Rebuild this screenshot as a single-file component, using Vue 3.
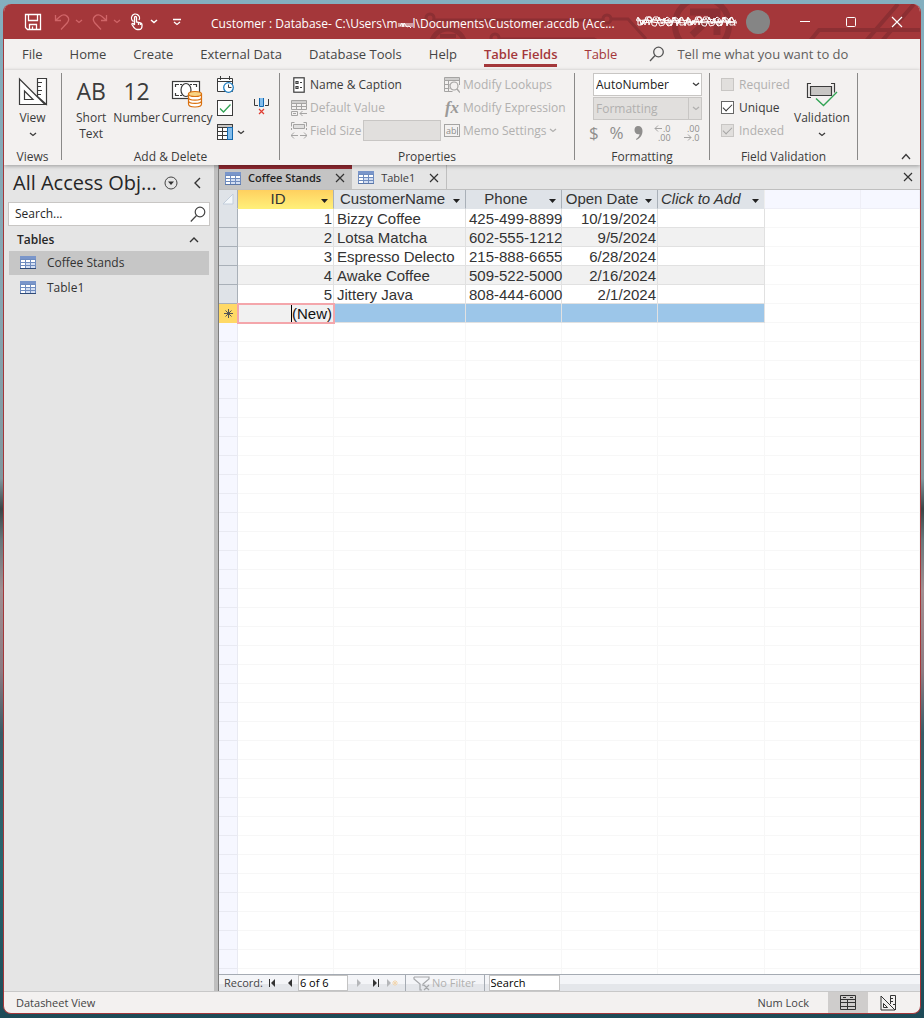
<script setup>
import { ref } from 'vue'

const menu = ['File', 'Home', 'Create', 'External Data', 'Database Tools', 'Help', 'Table Fields', 'Table']
const activeMenu = ref('Table Fields')
const objects = ['Coffee Stands', 'Table1']
const selected = ref('Coffee Stands')
const navSearch = ref('')
const recordPos = ref('6 of 6')
const recordSearch = ref('Search')
const unique = ref(true)
const columns = [
  { key: 'id', name: 'ID' },
  { key: 'name', name: 'CustomerName' },
  { key: 'phone', name: 'Phone' },
  { key: 'date', name: 'Open Date' },
  { key: 'add', name: 'Click to Add' },
]
const rows = [
  { id: 1, name: 'Bizzy Coffee', phone: '425-499-8899', date: '10/19/2024' },
  { id: 2, name: 'Lotsa Matcha', phone: '602-555-1212', date: '9/5/2024' },
  { id: 3, name: 'Espresso Delecto', phone: '215-888-6655', date: '6/28/2024' },
  { id: 4, name: 'Awake Coffee', phone: '509-522-5000', date: '2/16/2024' },
  { id: 5, name: 'Jittery Java', phone: '808-444-6000', date: '2/1/2024' },
]
const blankRows = 60

function scribble(width, height, seed) {
  const points = []
  let v = seed
  for (let x = 0; x <= width; x += 2) {
    v = (v * 37 + 11) % 101
    points.push(`${x + (v % 3)},${1 + (v % height)}`)
  }
  return points.join(' ')
}
</script>

<template>
  <div class="desktop">
    <div class="window">
      <header class="titlebar">
        <svg class="circuit" width="500" height="35" viewBox="0 0 500 35" fill="none" stroke="#8c2f33" stroke-width="4" aria-hidden="true">
          <circle cx="10" cy="14" r="4" stroke-width="3" />
          <path d="M14 16H182M192 15H208L226 35" stroke-width="3" />
          <circle cx="187" cy="15" r="4" stroke-width="3" />
          <circle cx="28" cy="42" r="17" stroke-width="5" />
          <path d="M20 32h16" stroke-width="4" />
          <circle cx="75" cy="34" r="4" stroke-width="3" />
          <path d="M79 35h95l8 4" stroke-width="3" />
          <circle cx="282" cy="21" r="27" stroke-width="6" />
          <path d="M270 8h27v23M297 8L272 31" stroke-width="7" />
          <path d="M390 37l9-11h101M446 37L478 0M462 37L494 0" />
        </svg>
        <button class="tb save" aria-label="Save">
          <svg width="18" height="18" viewBox="0 0 18 18" fill="none" stroke="#fff" stroke-width="1.3"><path d="M1.5 1.5h15v15h-13l-2-2zM4.500 1.500v6h9v-6M5.500 16.500v-5h7v5M8.500 16v-2.500" /></svg>
        </button>
        <button class="tb dim" aria-label="Undo">
          <svg width="16" height="18" viewBox="0 0 16 18" fill="none" stroke="currentColor" stroke-width="1.3"><path d="M1.500 2v5.500H7M2 7L6 3.500c5-4 11 1 7.500 6L7 16.500" /></svg>
          <svg width="8" height="5" viewBox="0 0 8 5" fill="none" stroke="currentColor" stroke-width="1.300"><path d="M1 1l3 2.500L7 1" /></svg>
        </button>
        <button class="tb dim" aria-label="Redo">
          <svg width="16" height="18" viewBox="0 0 16 18" fill="none" stroke="currentColor" stroke-width="1.300"><path d="M14.500 2v5.500H9M14 7L10 3.500c-5-4-11 1-7.500 6L9 16.500" /></svg>
          <svg width="8" height="5" viewBox="0 0 8 5" fill="none" stroke="currentColor" stroke-width="1.300"><path d="M1 1l3 2.500L7 1" /></svg>
        </button>
        <button class="tb touch" aria-label="Touch/Mouse Mode">
          <svg width="13" height="18" viewBox="0 0 13 18" fill="none" stroke="#fff" stroke-width="1.300"><path d="M3.500 8.500A4 4 0 1 1 9 7M4.500 12V4.500c0-1.500 2-1.500 2 0V9l4 .8c1 .2 1.500.8 1.500 2V13c0 2-1 3.500-3 3.500H7c-1.500 0-2-.7-3-2l-2-3c-.5-1 .8-1.500 1.500-.7l1 1.200M8.500 9.500V12M10.500 10v2" /></svg>
          <svg width="8" height="5" viewBox="0 0 8 5" fill="none" stroke="#fff" stroke-width="1.500"><path d="M1 1l3 2.500L7 1" /></svg>
        </button>
        <button class="tb" aria-label="Customize Quick Access Toolbar">
          <svg width="8" height="8" viewBox="0 0 8 8" fill="none" stroke="#fff" stroke-width="1.300"><path d="M0 1.500h8M1 4l3 2.500L7 4" /></svg>
        </button>
        <div class="title">Customer : Database- C:\Users\m<svg class="name-mask" width="15" height="8" viewBox="0 0 15 8" fill="none" stroke="#fff" stroke-width="1"><polyline :points="scribble(12, 7, 5)" /><path d="M0 3h15M0 5h15" /></svg>l\Documents\Customer.accdb (Acc...</div>
        <svg class="account" width="104" height="12" viewBox="0 0 104 12" fill="none" stroke="#fff" stroke-width="1" aria-label="Account name"><polyline :points="scribble(98, 11, 7)" /><polyline :points="scribble(98, 10, 23)" /><polyline :points="scribble(98, 11, 64)" /><path d="M1 5l7-1 9 1 9-1 10 1 9-1 12 2 9-1 12 1 9-1 14 1M6 7l9-1 9 1 12-1 14 1 9-1 14 1 14-1 14 1" /></svg>
        <span class="avatar"></span>
        <div class="window-controls">
          <button aria-label="Minimize"><svg width="12" height="12" viewBox="0 0 12 12" stroke="#fff"><path d="M1 5.500h10" /></svg></button>
          <button aria-label="Maximize"><svg width="12" height="12" viewBox="0 0 12 12" fill="none" stroke="#fff"><rect x="1.500" y="1.500" width="9" height="9" rx="1" /></svg></button>
          <button aria-label="Close"><svg width="12" height="12" viewBox="0 0 12 12" stroke="#fff" stroke-width="1.200"><path d="M1 1l10 10M11 1L1 11" /></svg></button>
        </div>
      </header>

      <nav class="menu">
        <button v-for="m in menu" :key="m" :class="{ active: m === activeMenu, contextual: m === 'Table' }" @click="activeMenu = m">{{ m }}</button>
        <label class="tellme">
          <svg width="16" height="16" viewBox="0 0 16 16" fill="none" stroke="#555" stroke-width="1.300"><circle cx="9.500" cy="6" r="4.800" /><path d="M6 9.500L1 15" /></svg>
          <input type="text" placeholder="Tell me what you want to do" aria-label="Tell me what you want to do" />
        </label>
      </nav>

      <section class="ribbon">
        <div class="group views">
          <div class="group-body">
            <button class="big">
              <svg width="30" height="30" viewBox="0 0 30 30" fill="#fff" stroke="#3b3b3b" stroke-width="1.200"><path d="M19.500 1.500h9v26l-9-8zM1.500 2v25.500H27zM6.500 14v8.500H15z" /><path d="M20 5.500h4M20 9.500h3M20 13.500h4M20 17.500h3" /></svg>
              <span>View</span>
              <svg class="chev" width="8" height="5" viewBox="0 0 8 5"><path d="M1 1l3 2.500L7 1" /></svg>
            </button>
          </div>
          <div class="group-label">Views</div>
        </div>

        <div class="group add">
          <div class="group-body">
            <button class="big"><span class="glyph">AB</span><span>Short<br />Text</span></button>
            <button class="big number"><span class="glyph">12</span><span>Number</span></button>
            <button class="big currency">
              <svg width="32" height="30" viewBox="0 0 32 30" fill="#fff" stroke="#3b3b3b" stroke-width="1.200">
                <rect x="1.500" y="4.500" width="27" height="17" /><path d="M4.500 10V7.500H8M22 7.500h3.500V10M4.500 16v2.500H8" fill="none" /><ellipse cx="15" cy="13" rx="5" ry="6.500" /><path d="M11 7.500h-2M19 7.500h2M11 18.500h-2" />
                <path d="M17.500 17v10c0 4 13 4 13 0V17z" fill="#fff" stroke="#d9700e" /><path d="M17.500 20.500c0 3.500 13 3.500 13 0M17.500 23.800c0 3.500 13 3.500 13 0" fill="none" stroke="#d9700e" /><ellipse cx="24" cy="17" rx="6.500" ry="2.500" fill="#f8d485" stroke="#d9700e" />
              </svg>
              <span>Currency</span>
            </button>
            <div class="small-stack">
              <button aria-label="Date &amp; Time"><svg width="17" height="17" viewBox="0 0 17 17" fill="#fff" stroke="#3b3b3b"><path d="M.5 2.500h15v13H.5zM.5 5.500h15M3.500 0v4M12.500 0v4" /><circle cx="11.500" cy="11.500" r="4.800" stroke="#1d7fc4" stroke-width="1.300" /><path d="M11.500 8.500v3h3" fill="none" /></svg></button>
              <button aria-label="Yes/No"><svg width="17" height="17" viewBox="0 0 17 17" fill="#fff" stroke="#3b3b3b"><rect x=".5" y=".5" width="15" height="15" /><path d="M3 8.500l3.500 3.500L13.500 4.500" fill="none" stroke="#31a354" stroke-width="1.300" /></svg></button>
              <button aria-label="More Fields"><svg width="17" height="17" viewBox="0 0 17 17" fill="#fff" stroke="#3b3b3b"><rect x=".5" y=".5" width="15" height="15" /><path d="M.5 .5h15v3H.5z" fill="#c8c6c4" /><path d="M5.500 3.500v12M.5 7.500h10M.5 11.500h10" /><path d="M10.500 3.500h5v12h-5z" fill="#83bdec" stroke="#1269b0" /></svg><svg class="chev" width="8" height="5" viewBox="0 0 8 5"><path d="M1 1l3 2.500L7 1" /></svg></button>
            </div>
            <button class="delete" aria-label="Delete"><svg width="17" height="19" viewBox="0 0 17 19" fill="none" stroke="#3b3b3b"><path d="M1.500 2v6.500H5M15.500 2v6.500H12" /><path d="M6.500 1v8.500h4V1" fill="#83bdec" stroke="#1269b0" /><path d="M6 12l5 5M11 12l-5 5" stroke="#e03c31" stroke-width="1.200" /></svg></button>
          </div>
          <div class="group-label">Add &amp; Delete</div>
        </div>

        <div class="group properties">
          <div class="group-body">
            <div class="prop-col">
              <button class="prop"><span class="ico"><svg width="12" height="16" viewBox="0 0 12 16" fill="none" stroke="#3b3b3b" stroke-width="1.200"><rect x=".8" y=".8" width="10.400" height="14.400" fill="#fff" /><path d="M3 4.500h2v2H3zM3 9.500h2v2H3zM7 5.500h2M7 10.500h2" /></svg></span>Name &amp; Caption</button>
              <button class="prop" disabled><span class="ico"><svg width="16" height="16" viewBox="0 0 16 16" fill="none" stroke="#a5a4a3"><path d="M.5 .5h15v3H.5z" fill="#cfcecd" /><path d="M.5 3.500v6h15v-6M.5 6.500h15M5.500 3v6M10.500 3v6M.5 11.500h6v4h-6zM2 13.500h3M9 13.500h7M11.500 11L9 13.500l2.500 2.500" /></svg></span>Default Value</button>
              <div class="size-row">
                <label class="prop off" for="field-size"><span class="ico"><svg width="16" height="17" viewBox="0 0 16 17" fill="none" stroke="#a5a4a3"><path d="M3.500 .5h-3v4M12.500 .5h3v4M.5 6v2M15.500 6v2" /><path d="M2.500 2.500h11v4h-11z" fill="#e0dfde" /><path d="M0 13.500h7M9 13.500h7M3 10.500l-3 3 3 3M13 10.500l3 3-3 3" /></svg></span>Field Size</label>
                <input id="field-size" type="text" disabled />
              </div>
            </div>
            <div class="prop-col">
              <button class="prop" disabled><span class="ico"><svg width="16" height="16" viewBox="0 0 16 16" fill="none" stroke="#a5a4a3"><path d="M.5 .5h15v3H.5z" fill="#cfcecd" /><path d="M.5 3.500v11h8M.5 7.500h5M.5 11.500h5M4.500 3v11M15.500 3v5" /><circle cx="10" cy="9" r="4" fill="#f3f1f0" stroke-width="1.200" /><path d="M13 12l3 3.500" stroke-width="1.400" /></svg></span>Modify Lookups</button>
              <button class="prop" disabled><span class="ico fx">fx</span>Modify Expression</button>
              <button class="prop" disabled><span class="ico"><svg width="16" height="14" viewBox="0 0 16 14" fill="none" stroke="#a5a4a3"><rect x=".5" y=".5" width="15" height="12" /><text x="2" y="10" class="ab">ab</text><path d="M13.500 3v8" /></svg></span>Memo Settings<svg class="chev" width="8" height="5" viewBox="0 0 8 5"><path d="M1 1l3 2.500L7 1" /></svg></button>
            </div>
          </div>
          <div class="group-label">Properties</div>
        </div>

        <div class="group formatting">
          <div class="group-body">
            <div class="selectbox"><select aria-label="Data Type"><option>AutoNumber</option></select><svg class="chev" width="8" height="5" viewBox="0 0 8 5"><path d="M1 1l3 2.500L7 1" /></svg></div>
            <div class="selectbox off"><select aria-label="Format" disabled><option>Formatting</option></select><svg class="chev" width="8" height="5" viewBox="0 0 8 5"><path d="M1 1l3 2.500L7 1" /></svg></div>
            <div class="format-row">
              <button disabled aria-label="Currency format">$</button>
              <button disabled aria-label="Percent format">%</button>
              <button disabled aria-label="Comma format"><svg width="9" height="14" viewBox="0 0 9 14" fill="#8f8e8d"><path d="M4 0c3 0 4.500 2 4.500 5 0 4-2.500 7.500-6 9l-.5-1c2-1.200 3.500-3 3.500-5C3 9 .5 7 .5 4 .5 1.500 2 0 4 0z" /></svg></button>
              <button disabled aria-label="Increase Decimals"><svg width="18" height="24" viewBox="0 0 18 24" fill="none" stroke="#a5a4a3"><path d="M1 7.500h7M4 4.500l-3 3 3 3" /><text x="9" y="11" class="dec">.0</text><text x="4" y="20" class="dec">.00</text></svg></button>
              <button disabled aria-label="Decrease Decimals"><svg width="18" height="24" viewBox="0 0 18 24" fill="none" stroke="#a5a4a3"><path d="M1 16.500h7M5 13.500l3 3-3 3" /><text x="4" y="11" class="dec">.00</text><text x="9" y="20" class="dec">.0</text></svg></button>
            </div>
          </div>
          <div class="group-label">Formatting</div>
        </div>

        <div class="group validation">
          <div class="group-body">
            <div class="checks">
              <label class="off"><input type="checkbox" disabled />Required</label>
              <label><input v-model="unique" type="checkbox" />Unique</label>
              <label class="off"><input type="checkbox" checked disabled />Indexed</label>
            </div>
            <button class="big">
              <svg width="32" height="30" viewBox="0 0 32 30" fill="none" stroke="#3b3b3b" stroke-width="1.200"><path d="M5 6.500H1.500v14H5M25 6.500h3.500v9" /><path d="M4.500 9.500h21v9h-21z" fill="#c8c6c4" /><path d="M10 21.500l7.500 7L31 15" stroke="#31a354" stroke-width="1.400" /></svg>
              <span>Validation</span>
              <svg class="chev" width="8" height="5" viewBox="0 0 8 5"><path d="M1 1l3 2.500L7 1" /></svg>
            </button>
          </div>
          <div class="group-label">Field Validation</div>
        </div>
        <button class="collapse" aria-label="Collapse the Ribbon"><svg width="10" height="7" viewBox="0 0 10 7" fill="none" stroke="#3b3b3b" stroke-width="1.300"><path d="M1 6l4-4.500L9 6" /></svg></button>
      </section>

      <div class="workspace">
        <aside class="navpane">
          <div class="nav-head">
            <h1>All Access Obj...</h1>
            <button aria-label="Object filter"><svg width="14" height="14" viewBox="0 0 14 14" fill="none" stroke="#444"><circle cx="7" cy="7" r="6" /><path d="M4 5.500h6L7 9z" fill="#333" stroke="none" /></svg></button>
            <button class="shutter" aria-label="Close navigation pane"><svg width="8" height="12" viewBox="0 0 8 12" fill="none" stroke="#333" stroke-width="1.400"><path d="M7 1L2 6l5 5" /></svg></button>
          </div>
          <div class="nav-search">
            <input v-model="navSearch" type="text" placeholder="Search..." aria-label="Search objects" />
            <svg width="16" height="16" viewBox="0 0 16 16" fill="none" stroke="#444" stroke-width="1.200"><circle cx="10" cy="6" r="4.800" /><path d="M6.500 9.500L.8 15.500" /></svg>
          </div>
          <button class="nav-section">Tables<svg width="10" height="7" viewBox="0 0 10 7" fill="none" stroke="#333" stroke-width="1.400"><path d="M1 6l4-4L9 6" /></svg></button>
          <button v-for="o in objects" :key="o" class="nav-item" :class="{ current: o === selected }" @click="selected = o">
            <svg width="16" height="13" viewBox="0 0 16 13"><path d="M0 0h16v13H0z" fill="#6f8cbf" /><path d="M0 0h16v3H0z" fill="#7a96ca" /><path d="M1 4h4v2H1zM6 4h4v2H6zM11 4h4v2h-4zM1 7h4v2H1zM1 10h4v2H1z" fill="#fff" /><path d="M6 7h4v2H6zM11 7h4v2h-4zM6 10h4v2H6zM11 10h4v2h-4z" fill="#d3def2" /><path d="M0 12h16v1H0z" fill="#2f4a78" /></svg>{{ o }}
          </button>
        </aside>

        <main class="document">
          <div class="tabs">
            <div v-for="(o, i) in objects" :key="o" class="tab" :class="{ open: i === 0 }">
              <button class="tab-name">
                <svg width="16" height="13" viewBox="0 0 16 13"><path d="M0 0h16v13H0z" fill="#6f8cbf" /><path d="M0 0h16v3H0z" fill="#7a96ca" /><path d="M1 4h4v2H1zM6 4h4v2H6zM11 4h4v2h-4zM1 7h4v2H1zM1 10h4v2H1z" fill="#fff" /><path d="M6 7h4v2H6zM11 7h4v2h-4zM6 10h4v2H6zM11 10h4v2h-4z" fill="#d3def2" /><path d="M0 12h16v1H0z" fill="#5b77a8" /></svg>{{ o }}
              </button>
              <button :aria-label="'Close ' + o"><svg width="10" height="10" viewBox="0 0 10 10" stroke="#333" stroke-width="1.200"><path d="M1 1l8 8M9 1L1 9" /></svg></button>
            </div>
            <button class="close-doc" aria-label="Close document"><svg width="10" height="10" viewBox="0 0 10 10" stroke="#333" stroke-width="1.200"><path d="M1 1l8 8M9 1L1 9" /></svg></button>
          </div>

          <div class="sheet">
            <table>
              <colgroup><col class="c-sel" /><col class="c-std" /><col class="c-name" /><col class="c-std" /><col class="c-std" /><col class="c-add" /><col class="c-std" /><col /></colgroup>
              <thead>
                <tr>
                  <th class="corner"><svg width="12" height="12" viewBox="0 0 12 12"><path d="M11 1v10H1z" fill="#f3f7fb" stroke="#c3cedb" /></svg></th>
                  <th v-for="c in columns" :key="c.key" :class="c.key"><div class="head"><span>{{ c.name }}</span><svg width="7" height="4" viewBox="0 0 7 4"><path d="M0 0h7L3.500 4z" fill="#222" /></svg></div></th>
                  <th class="void"></th><th class="void"></th>
                </tr>
              </thead>
              <tbody>
                <tr v-for="(r, i) in rows" :key="r.id" :class="{ alt: i % 2 === 1 }">
                  <td class="sel"></td><td class="right">{{ r.id }}</td><td>{{ r.name }}</td><td>{{ r.phone }}</td><td class="right">{{ r.date }}</td><td></td><td class="void"></td><td class="void"></td>
                </tr>
                <tr class="new">
                  <td class="sel"><svg width="9" height="9" viewBox="0 0 9 9" stroke="#555"><path d="M4.500 0v9M0 4.500h9M1.500 1.500l6 6M7.500 1.500l-6 6" /></svg></td>
                  <td class="right focus"><span class="caret">(New)</span></td><td></td><td></td><td></td><td></td><td class="void"></td><td class="void"></td>
                </tr>
                <tr v-for="n in blankRows" :key="'b' + n" class="blank"><td class="sel"></td><td v-for="k in 7" :key="k"></td></tr>
              </tbody>
            </table>
          </div>

          <div class="recordbar">
            <label for="rec">Record:</label>
            <button class="first" aria-label="First record"><svg width="8" height="8" viewBox="0 0 8 8" fill="#333"><path d="M1 0h1v8H1zM7 0v8L3 4z" /></svg></button>
            <button aria-label="Previous record"><svg width="8" height="8" viewBox="0 0 8 8" fill="#333"><path d="M6 0v8L2 4z" /></svg></button>
            <input id="rec" v-model="recordPos" class="pos" type="text" />
            <button class="next" aria-label="Next record" disabled><svg width="8" height="8" viewBox="0 0 8 8" fill="#b5b7ba"><path d="M2 0v8l4-4z" /></svg></button>
            <button class="last" aria-label="Last record"><svg width="8" height="8" viewBox="0 0 8 8" fill="#333"><path d="M6 0h1v8H6zM1 0v8l4-4z" /></svg></button>
            <button class="new-rec" aria-label="New record" disabled><svg width="13" height="8" viewBox="0 0 13 8" fill="#b5b7ba"><path d="M1 0v8l4-4z" /><path d="M9 1v6M6 4h6M7 2l4 4M11 2L7 6" stroke="#f1d6b0" /></svg></button>
            <button class="filter" disabled><svg width="17" height="15" viewBox="0 0 17 15" fill="none" stroke="#a5a7aa" stroke-width="1.200"><path d="M1 1h15v2l-6 5v2M1 1v2l6 5v6h2M11 9l5 5M16 9l-5 5" /></svg>No Filter</button>
            <input v-model="recordSearch" class="rec-search" type="text" aria-label="Search records" />
          </div>
        </main>
      </div>

      <footer class="status">
        <span>Datasheet View</span>
        <span class="lock">Num Lock</span>
        <button class="view on" aria-label="Datasheet View"><svg width="16" height="16" viewBox="0 0 16 16" fill="none" stroke="#333"><path d="M.5 .5h15v14H.5zM.5 4.500h15M.5 7.500h15M.5 11.500h15M7.500 4v10M3 2.500h3M10 2.500h3" /></svg></button>
        <button class="view" aria-label="Design View"><svg width="16" height="16" viewBox="0 0 16 16" fill="none" stroke="#333"><path d="M1 1v14h14zM3.500 8.500v4h4zM10.500 9V.5h5V15M11 3.500h2M11 6.500h2M13 9.500h2" /></svg></button>
      </footer>
    </div>
  </div>
</template>

<style>
body { margin: 0; overflow: hidden; }
</style>

<style scoped>
* { box-sizing: border-box; }
.desktop {
  height: 100vh;
  padding: 4px 3px;
  background: linear-gradient(#84afbf 0%, #86a6b2 30%, #81989f 47%, #3b4547 50%, #68777b 53%, #a18f92 58%, #8d7b82 66%, #395c67 72%, #27666f 85%, #1e4a57 100%);
  font-family: "Open Sans", "Noto Sans", sans-serif;
  font-size: 12px;
  line-height: 16px;
  color: #3b3b3b;
}
.window {
  display: flex;
  flex-direction: column;
  height: 100%;
  border: 1px solid #a4373a;
  border-top: 0;
  border-radius: 8px;
  overflow: hidden;
  background: #f3f1f0;
}
button { border: 0; padding: 0; background: none; font: inherit; color: inherit; display: flex; align-items: center; }
svg { flex: none; }
input, select { font: inherit; color: inherit; border-radius: 0; outline: 0; }
.chev path { fill: none; stroke: currentColor; stroke-width: 1.3px; }

.titlebar { position: relative; display: flex; align-items: center; height: 35px; flex: none; background: #a4373a; color: #fff; padding-left: 20px; }
.circuit { position: absolute; right: 0; top: 0; pointer-events: none; }
.titlebar > :not(.circuit) { position: relative; }
.tb { gap: 5px; margin-right: 10px; }
.tb.save { margin-right: 12px; }
.tb.dim { color: #d06568; margin-right: 9px; }
.tb.touch { gap: 7px; margin-right: 15px; }
.title { flex: 1; white-space: nowrap; overflow: hidden; margin-left: 20px; padding-top: 4px; }
.name-mask { vertical-align: -1px; }
.account { flex: none; }
.avatar { width: 24px; height: 24px; border-radius: 50%; background: #858585; margin: 0 12px 0 6px; }
.window-controls { display: flex; }
.window-controls button { width: 46px; height: 35px; justify-content: center; }

.menu { display: flex; align-items: flex-start; gap: 27px; height: 31px; flex: none; padding: 6px 0 0 18px; font-size: 13px; }
.menu button { white-space: nowrap; line-height: 18px; padding-bottom: 1px; border-bottom: 3px solid transparent; color: #444; }
.menu button.active { color: #a4373a; border-color: #a4373a; font-weight: 600; }
.menu button.contextual { color: #a4373a; }
.tellme { display: flex; align-items: center; gap: 12px; flex: 1; margin-left: 5px; }
.tellme input { flex: 1; min-width: 0; border: 0; padding: 0; height: 18px; background: none; }
.tellme input::placeholder { color: #5f5e5d; opacity: 1; }

.ribbon { display: flex; height: 95px; flex: none; padding: 3px 0 5px; position: relative; z-index: 1; box-shadow: 0 1px 4px #0005; background: #f3f1f0; }
.group { display: flex; flex-direction: column; border-right: 1px solid #8a8988; }
.group-body { flex: 1; display: flex; align-items: flex-start; min-height: 0; }
.group-label { text-align: center; height: 12px; line-height: 18px; }
.views { width: 58px; }
.views .group-body { justify-content: center; }
.add { width: 218px; }
.properties { width: 295px; }
.formatting { width: 135px; }
.validation { width: 148px; }
.big { flex-direction: column; padding-top: 3px; }
.big > svg:first-child, .glyph { height: 32px; margin-bottom: 2px; }
.big .chev { margin-top: 6px; }
.glyph { font-size: 23px; line-height: 31px; }
.big span { text-align: center; white-space: nowrap; }
.add .group-body { padding-left: 14px; }
.number { margin-left: 7px; }
.currency { margin-left: 2px; }
.small-stack { display: flex; flex-direction: column; gap: 7px; margin: 3px 0 0 5px; width: 28px; }
.small-stack button { gap: 3px; }
.delete { margin: 24px 0 0 8px; }
.properties .group-body { padding-left: 11px; gap: 3px; }
.prop-col { display: flex; flex-direction: column; }
.prop { height: 23px; white-space: nowrap; display: flex; align-items: center; gap: 3px; }
.prop:disabled, .off { color: #b1b0af; }
.ico { width: 16px; display: flex; justify-content: center; flex: none; }
.fx { font: italic bold 17px "Liberation Serif", serif; color: #9b9a99; }
.ab { font: 9px "Open Sans", sans-serif; fill: #8f8e8d; stroke: none; }
.size-row { display: flex; align-items: center; gap: 2px; width: 150px; }
.size-row input { flex: 1; min-width: 0; height: 21px; border: 1px solid #c8c6c4; background: #e1dfdd; }
.formatting .group-body { flex-direction: column; padding-left: 18px; }
.selectbox { position: relative; width: 109px; margin-bottom: 1px; }
.selectbox select { appearance: none; width: 100%; height: 23px; border: 1px solid #c8c6c4; background: #fff; padding: 0 2px; color: #222; display: block; opacity: 1; }
.selectbox .chev { position: absolute; right: 2px; top: 9px; }
.selectbox.off select { background: #e1dfdd; color: #b1b0af; }
.selectbox.off::after { content: ""; position: absolute; right: 13px; top: 0; bottom: 0; border-left: 1px solid #c8c6c4; }
.format-row { display: flex; align-items: center; justify-content: space-between; width: 112px; height: 24px; margin-left: -4px; font-size: 17px; color: #8f8e8d; }
.dec { font: 9px "Open Sans", sans-serif; fill: #8f8e8d; stroke: none; }
.validation .group-body { padding-left: 11px; }
.checks { display: flex; flex-direction: column; width: 71px; }
.checks label { display: flex; align-items: center; gap: 5px; height: 23px; }
.checks input { appearance: none; width: 13px; height: 13px; margin: 0; border: 1px solid #666; background: #fff; display: flex; }
.checks input:disabled { border-color: #c8c6c4; background: #e1dfdd; }
.checks input:checked::after { content: ""; width: 8px; height: 4px; margin: 2px 0 0 1px; border: solid #333; border-width: 0 0 1px 1px; transform: rotate(-45deg); }
.checks input:disabled:checked::after { border-color: #a5a4a3; }
.validation .big { margin-left: 2px; }
.collapse { margin-left: auto; align-self: flex-end; padding: 0 9px 0 0; }

.workspace { flex: 1; min-height: 0; display: flex; background: #e5e5e5; }
.navpane { width: 214px; flex: none; background: #e5e5e5; border-right: 4px solid #bfbfbf; color: #262626; padding: 2px 5px 0; }
.nav-head { display: flex; align-items: center; height: 32px; padding: 0 8px 0 4px; margin-bottom: 3px; }
h1 { margin: 0; font-size: 20px; line-height: 28px; font-weight: 400; white-space: nowrap; flex: 1; }
.shutter { margin-left: 15px; }
.nav-search { display: flex; align-items: center; height: 24px; background: #fff; border: 1px solid #c8c6c4; padding: 0 3px 0 6px; margin: 0 -1px; }
.nav-search input { flex: 1; min-width: 0; border: 0; padding: 0; background: none; }
.nav-search input::placeholder { color: #262626; opacity: 1; }
.nav-section { width: 100%; justify-content: space-between; height: 25px; padding: 2px 10px 0 8px; font-weight: 600; }
.nav-item { width: 100%; height: 24px; gap: 11px; padding-left: 11px; margin-bottom: 1px; color: #333; }
.nav-item svg { margin-bottom: 2px; }
.nav-item.current { background: #c6c6c6; }

.document { flex: 1; min-width: 0; display: flex; flex-direction: column; border-left: 1px solid #7d7d7d; }
.tabs { display: flex; height: 25px; flex: none; border-bottom: 1px solid #bfbfbf; background: #e5e5e5; font-size: 11px; }
.tab { display: flex; align-items: center; gap: 14px; padding: 1px 7px 0 6px; border-right: 1px solid #bfbfbf; }
.tab.open { background: #c4c4c4; border-right: 0; border-top: 4px solid #8d282f; padding: 0 7px 2px 6px; font-weight: 600; color: #222; }
.tab-name { gap: 7px; white-space: nowrap; }
.close-doc { margin-left: auto; padding-right: 7px; }

.sheet { flex: 1 1 0; min-height: 0; overflow: hidden; background: #fff; }
table { width: 100%; table-layout: fixed; border-collapse: separate; border-spacing: 0; font-family: "Liberation Sans", Arial, sans-serif; font-size: 15px; line-height: 17px; color: #333; }
.c-sel { width: 19px; }
.c-std { width: 96px; }
.c-name { width: 132px; }
.c-add { width: 107px; }
th, td { height: 19px; padding: 1px 0 0 3px; border-right: 1px solid #e1e1e1; border-bottom: 1px solid #e1e1e1; font-weight: 400; white-space: nowrap; }
td.right { text-align: right; padding: 1px 1px 0 0; }
th { background: #dfe3e8; border-right-color: #a9b0b8; border-bottom-color: #dfe3e8; padding: 0 0 1px 3px; }
th.void { background: #f6f7ff; border-color: #eeeef6; }
th.id { background: linear-gradient(#ffd05f, #ffef79); border-bottom-color: #ffef79; }
th.add { font-style: italic; border-right-color: #eee; }
.head { display: flex; align-items: center; padding-right: 5px; }
.head span { flex: 1; text-align: center; padding-right: 6px; }
.add .head span, .name .head span { text-align: left; padding-right: 0; }
.name .head { padding-left: 3px; }
.head svg { margin-top: 4px; }
.corner, .sel { padding: 0; text-align: center; line-height: 0; }
td.sel { background: #dfe3e8; border-color: #a9b0b8; }
.alt td:not(.sel, .void) { background: #f1f1f1; }
td.void, .blank td { border-color: #f7f7f7; }
.blank td.sel { background: #f6f7ff; border-color: #e9eaf2; }
.new td:not(.void) { background: #9cc6e9; }
.new td.sel { background: #ffd966; border-bottom-color: #ffd966; }
.new td.focus { background: #f1f1f1; outline: 2px solid #f4a6ab; outline-offset: -1px; color: #111; position: relative; }
.caret { border-left: 1px solid #000; }

.recordbar { display: flex; align-items: center; height: 17px; flex: none; border-top: 1px solid #a5abb3; background: linear-gradient(#f4f5f8 55%, #e4e6ea 55%); padding-left: 5px; color: #444; overflow: hidden; font-size: 11px; }
.recordbar button { margin-left: 10px; }
.recordbar .first { margin-left: 5px; }
.recordbar input { height: 16px; border: 1px solid #c3c3c3; background: #fff; padding: 0 1px; color: #000; }
.pos { width: 50px; margin: 0 7px 0 4px; }
.recordbar .next { margin-left: 0; }
.recordbar .last { margin-left: 9px; }
.recordbar .new-rec, .recordbar .filter { margin-left: 6px; }
.filter { padding: 0 8px 0 7px; border-left: 1px solid #a5abb3; border-right: 1px solid #a5abb3; height: 17px; gap: 2px; color: #b1b0af; white-space: nowrap; }
.rec-search { width: 71px; margin-left: 4px; }

.status { display: flex; align-items: center; height: 22px; flex: none; border-top: 1px solid #c8c8c8; padding: 0 12px; color: #444; font-size: 11px; }
.lock { margin-left: auto; margin-right: 19px; }
.view { width: 40px; height: 100%; justify-content: center; }
.view.on { background: #cfcdcc; }
</style>
